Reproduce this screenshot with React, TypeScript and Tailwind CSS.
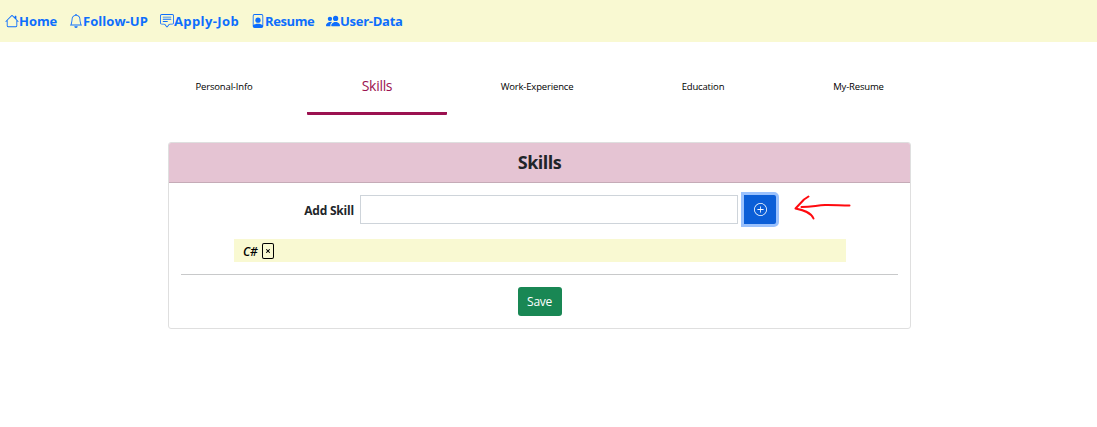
import { BsHouse, BsBell, BsChatSquareText, BsFilePerson, BsPeopleFill, BsPlusCircle, BsFileX } from "react-icons/bs";

const links = [
  { label: "Home", Icon: BsHouse, box: "w-[64px]", text: "tracking-[-0.05px]" },
  { label: "Follow-UP", Icon: BsBell, box: "w-[91px]", text: "tracking-[0.05px]" },
  { label: "Apply-Job", Icon: BsChatSquareText, box: "w-[91px]", text: "tracking-[0.4px]" },
  { label: "Resume", Icon: BsFilePerson, box: "w-[75px]", text: "tracking-[-0.4px]" },
  { label: "User-Data", Icon: BsPeopleFill, box: "w-[91px]", text: "tracking-[-0.27px]" },
];

const tabs = [
  { label: "Personal-Info", box: "w-[112px]" },
  { label: "Skills", box: "w-[140px]", active: true },
  { label: "Work-Experience", box: "w-[180px]" },
  { label: "Education", box: "w-[152px]" },
  { label: "My-Resume", box: "w-[159px]" },
];

export default function App() {
  return (
    <div className="min-h-[427px] bg-white font-['Open_Sans',sans-serif] text-[#212529]">
      <nav className="flex h-[42px] items-center bg-[#f9f9d2] pl-[5px] text-[#0d6efd]">
        {links.map(({ label, Icon, box, text }) => (
          <a key={label} className={`flex shrink-0 items-center whitespace-nowrap ${box}`}>
            <Icon className="size-[14px] shrink-0" />
            <span className={`text-[13px] leading-5 font-bold ${text}`}>{label}</span>
          </a>
        ))}
      </nav>

      <div className="ml-[168px] flex h-[73px] text-black">
        {tabs.map(({ label, box, active }) => (
          <div
            key={label}
            className={`flex shrink-0 justify-center whitespace-nowrap ${box} ${
              active
                ? "ml-[27px] rounded-[1px] border-b-[3px] border-[#9b1150] pt-[34px] text-[14px] leading-5 font-medium tracking-[-0.3px] text-[#9b1150]"
                : "pt-[37px] text-[9.5px] leading-4 tracking-[-0.16px]"
            }`}
          >
            {label}
          </div>
        ))}
      </div>

      <section className="mt-[27px] ml-[168px] h-[187px] w-[743px] overflow-hidden rounded-[3px] border border-[#dfdfdf]">
        <h1 className="flex h-[40px] items-center justify-center border-b border-[#c5abb7] bg-[#e5c4d3] text-[18px] font-bold tracking-[-0.5px]">
          Skills
        </h1>
        <div className="mt-[9px] flex h-[35px] items-center">
          <label className="w-[185px] pt-[2px] text-right text-[12px] font-bold tracking-[-0.2px]">Add Skill</label>
          <input className="ml-[6px] h-[29px] w-[378px] border border-[#ced4da]" />
          <button className="ml-[3px] flex h-[35px] w-[38px] items-center justify-center rounded-r-[5px] border-[3px] border-[#9ac1fd] bg-[#0b5ed7] text-white">
            <BsPlusCircle className="size-[13px]" />
          </button>
        </div>
        <div className="mt-[12px] ml-[65px] flex h-[23px] w-[612px] items-center bg-[#f9f9d2] pl-[9px] text-black">
          <span className="w-[17px] pt-[2px] text-[12px] font-semibold tracking-[-0.2px] italic">C#</span>
          <BsFileX className="size-[16px]" />
        </div>
        <hr className="mx-[12px] mt-[12px] border-[#c8c9ca]" />
        <div className="mt-[12px] flex justify-center">
          <button className="h-[29px] w-[44px] rounded-[3px] bg-[#198754] text-[12px] tracking-[-0.3px] text-white">Save</button>
        </div>
      </section>

      <svg className="absolute top-[190px] left-[785px]" width="75" height="35" fill="none" stroke="#ff0a0f" strokeWidth="2" strokeLinecap="round" strokeLinejoin="round">
        <path d="M23.5 6.5 19 9.5 10.5 18.5 C18 20 26 22 28.5 28.5 M16.5 17 C27 17 32 15.2 40 15 S56 15.5 64.5 15.5" />
      </svg>
    </div>
  );
}
